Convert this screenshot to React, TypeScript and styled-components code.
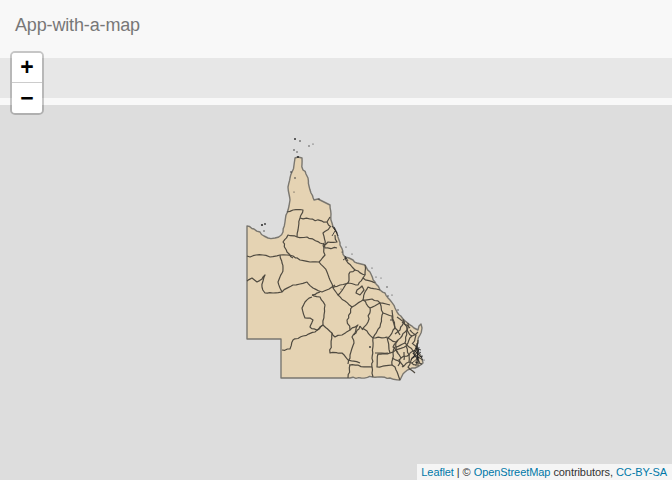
import React from 'react';
import styled, { createGlobalStyle } from 'styled-components';

const GlobalStyle = createGlobalStyle`
  html, body {
    margin: 0;
    padding: 0;
    height: 100%;
    overflow: hidden;
  }
  #root {
    height: 100%;
  }
`;

const Page = styled.div`
  width: 672px;
  height: 480px;
  display: flex;
  flex-direction: column;
  position: relative;
  font-family: "Liberation Sans", Arial, sans-serif;
  background-color: #f8f8f8;
`;

const Navbar = styled.div`
  height: 58px;
  display: flex;
  align-items: center;
  padding-left: 15px;
  padding-bottom: 8px;
  box-sizing: border-box;
  background-color: #f8f8f8;
`;

const Brand = styled.span`
  font-size: 18px;
  letter-spacing: -0.15px;
  color: #777777;
`;

const Band = styled.div`
  height: 40px;
  background-color: #e7e7e7;
`;

const Strip = styled.div`
  height: 7px;
  background-color: #f8f8f8;
`;

const MapPane = styled.div`
  flex: 1;
  position: relative;
  overflow: hidden;
  background-color: #dddddd;
`;

const MapSvg = styled.svg`
  position: absolute;
  inset: 0;
  display: block;
`;

const ZoomControl = styled.div`
  position: absolute;
  left: 10px;
  top: 51px;
  width: 34px;
  border: 2px solid rgba(0, 0, 0, 0.2);
  border-radius: 5px;
  box-sizing: border-box;
  background-clip: padding-box;
  overflow: hidden;
`;

const ZoomButton = styled.div<{ $first?: boolean }>`
  height: 30px;
  box-sizing: border-box;
  display: flex;
  align-items: center;
  justify-content: center;
  background-color: #ffffff;
  color: #000000;
  font-family: "Liberation Sans", Arial, sans-serif;
  font-size: 23px;
  font-weight: bold;
  border-bottom: ${(p) => (p.$first ? '1px solid #cccccc' : 'none')};
`;

const Attribution = styled.div`
  position: absolute;
  right: 0;
  bottom: 0;
  padding: 0 5px 0 4px;
  font-size: 11px;
  letter-spacing: -0.07px;
  line-height: 16px;
  color: #333333;
  background-color: rgba(255, 255, 255, 0.7);
  white-space: nowrap;
`;

const AttrLink = styled.a`
  color: #0078a8;
  text-decoration: none;
`;

const OUTLINE =
  'M295 158L298 157L302 158L302 164L303 170L306 174L308 178L309 186L311 193L314 200L318 199L322 201L326 203L330 205L331 214L332 223L335 229L337 233L339 240L340 245L345 257L349 258L353 260L357 263L361 264L365 265L370 272L375 282L380 290L385 293L390 300L395 308L397 312L403 319L410 325L414 328L418 330L419 326L421 324L422 328L420 335L418 340L417 345L418 350L421 356L423 363L419 366L415 368L410 369L405 372L402 376L400 380L390 378L373 377L350 378L320 378L281 378L281 339L247 339L247 226L254 229L260 232L264 236L268 238L275 238L280 236L283 232L285 222L287 213L289 206L290 200L289 194L288 187L290 178L292 172L294 165Z';

const BOUNDARIES = [
  // north
  'M287 212L293 210L303 210L300 218L298 230L297 237',
  'M300 218L310 219L327 222L330 217',
  'M327 222L331 227',
  'M297 237L307 237L320 243L325 245L328 242L337 242L335 235',
  'M325 245L323 233L330 227',
  'M297 237L288 235L283 242L287 252L293 258',
  'M323 243L325 248L337 248',
  // west and central
  'M247 256L250 257L256 255L263 255L270 257L280 255L287 255L293 256L300 260L310 262L319 262L325 255L323 245',
  'M319 262L327 272L330 280L333 288L338 295L343 289L348 283L350 272L355 270L348 263L345 257',
  'M280 255L282 263L283 268L282 273L278 282L282 292',
  'M247 281L252 278L257 282L262 279L265 275L263 281L262 287L265 293L273 293L282 292L293 285L300 284L307 282L313 288L322 292L332 287L335 285',
  'M312 295L320 297L325 305L324 315L323 325L317 330L310 327L313 320L310 318L305 318L302 308L305 302L312 297',
  'M312 295L320 292',
  'M323 325L332 333L335 337L342 335L350 330L347 320L352 307L345 301L338 295',
  'M282 350L290 349L293 340L303 336L315 332L323 325',
  'M332 333L330 353L342 353L348 360L360 363',
  'M350 365L348 378',
  'M350 330L358 325L354 335',
  // middle east
  'M333 288L340 285L348 283L358 285L363 278L375 283',
  'M355 270L365 275L363 278',
  'M365 265L365 275',
  'M357 290L362 286L364 290L360 295L356 293Z',
  'M352 307L363 300L370 308L368 322L362 330',
  'M363 300L365 292L368 287L380 290',
  'M370 308L380 303L383 313',
  'M363 300L372 299L380 303L390 305',
  // south east
  'M360 326L367 331L373 338',
  'M360 326L352 337L354 343L350 355L348 364',
  'M349 365L372 367L373 338L387 337L390 353L378 354L377 367L392 365L395 367L400 380',
  'M372 367L373 377',
  'M373 338L380 327L383 313L392 316L395 328L388 338',
  'M392 310L395 328L400 335',
  'M392 365L393 353L395 347L405 343',
  'M375 353L388 353',
  'M408 323L405 343L415 353L408 367L415 373',
  // dense south east grid
  'M397 317L404 322L400 330L395 334',
  'M403 319L407 330L412 336L418 332',
  'M388 338L396 342L402 336L407 330',
  'M390 353L396 350L401 358L398 366',
  'M396 342L396 350L406 346L412 336',
  'M401 358L409 355L406 346',
  'M409 355L415 350L418 340',
  'M402 367L409 362L409 355',
  'M398 340L393 347L398 353',
  'M409 362L416 365',
  'M404 352L404 360',
  'M412 343L417 347L413 354',
  'M410 330L416 335L413 343',
  'M399 359L404 367',
  'M392 358L400 362',
  'M402 322L410 328',
];

const DENSE = [
  'M414 350L422 358', 'M416 346L419 362', 'M413 358L421 352', 'M415 362L422 364',
  'M417 343L418 366', 'M414 355L423 360', 'M411 360L419 350', 'M419 347L416 366',
  'M415 348L421 350', 'M413 353L420 363', 'M416 358L423 356', 'M412 363L418 358',
  'M334 227L338 236', 'M332 226L337 233', 'M335 231L332 236', 'M345 256L348 261', 'M346 258L343 260',
];

const ISLANDS: [number, number, number][] = [
  [295, 139, 1], [300, 141, 0.8], [309, 146, 0.7], [313, 144, 0.6], [294, 150, 0.8],
  [297, 152, 0.7], [298, 157, 1.1], [291, 172, 0.8], [295, 178, 0.8], [294, 192, 0.6],
  [319, 199, 0.7], [262, 225, 1.1], [265, 224, 0.9], [264, 231, 0.7], [346, 247, 0.6],
  [352, 254, 0.6], [372, 268, 0.6], [376, 277, 0.6], [381, 278, 0.5], [387, 287, 0.7],
  [388, 296, 0.7], [392, 295, 0.6], [398, 310, 0.7], [391, 320, 0.8], [370, 347, 0.9],
  [341, 289, 0.5], [424, 360, 0.6], [342, 252, 0.6],
];

// small seeded noise so the long straight chords read as surveyed boundaries
const roughen = (d: string, seed: number) => {
  const closed = d.endsWith('Z');
  const pts = d.replace(/[MZ]/g, '').split('L').map((p) => p.trim().split(' ').map(Number));
  let s = seed * 97 + 13;
  const rnd = () => {
    s = (s * 9301 + 49297) % 233280;
    return s / 233280 - 0.5;
  };
  let out = `M${pts[0][0]} ${pts[0][1]}`;
  for (let i = 1; i < pts.length; i++) {
    const [ax, ay] = pts[i - 1];
    const [bx, by] = pts[i];
    const len = Math.hypot(bx - ax, by - ay);
    const axisAligned = (ax === bx || ay === by) && len > 15;
    const steps = axisAligned ? 1 : Math.max(1, Math.round(len / 3));
    for (let j = 1; j < steps; j++) {
      const t = j / steps;
      out += `L${(ax + (bx - ax) * t + rnd() * 1.5).toFixed(1)} ${(ay + (by - ay) * t + rnd() * 1.5).toFixed(1)}`;
    }
    out += `L${bx} ${by}`;
  }
  return closed ? `${out}Z` : out;
};

const App = () => {
  return (
    <Page>
      <GlobalStyle />
      <Navbar>
        <Brand>App-with-a-map</Brand>
      </Navbar>
      <Band />
      <Strip />
      <MapPane>
        <MapSvg width="672" height="375" viewBox="0 105 672 375">
          <path d={roughen(OUTLINE, 1)} fill="#e5d3b3" stroke="#7a7770" strokeWidth="1.4" strokeLinejoin="round" />
          {BOUNDARIES.map((d, i) => (
            <path key={d} d={roughen(d, i + 2)} fill="none" stroke="#4f4a40" strokeWidth="1.2" strokeLinejoin="round" />
          ))}
          {DENSE.map((d) => (
            <path key={d} d={d} fill="none" stroke="#222222" strokeWidth="0.8" />
          ))}
          {ISLANDS.map(([x, y, r]) => (
            <circle key={`${x}-${y}`} cx={x} cy={y} r={r} fill="#333333" />
          ))}
        </MapSvg>
        <Attribution>
          <AttrLink href="#">Leaflet</AttrLink> | © <AttrLink href="#">OpenStreetMap</AttrLink> contributors,{' '}
          <AttrLink href="#">CC-BY-SA</AttrLink>
        </Attribution>
      </MapPane>
      <ZoomControl>
        <ZoomButton $first>+</ZoomButton>
        <ZoomButton>−</ZoomButton>
      </ZoomControl>
    </Page>
  );
};

export default App;
